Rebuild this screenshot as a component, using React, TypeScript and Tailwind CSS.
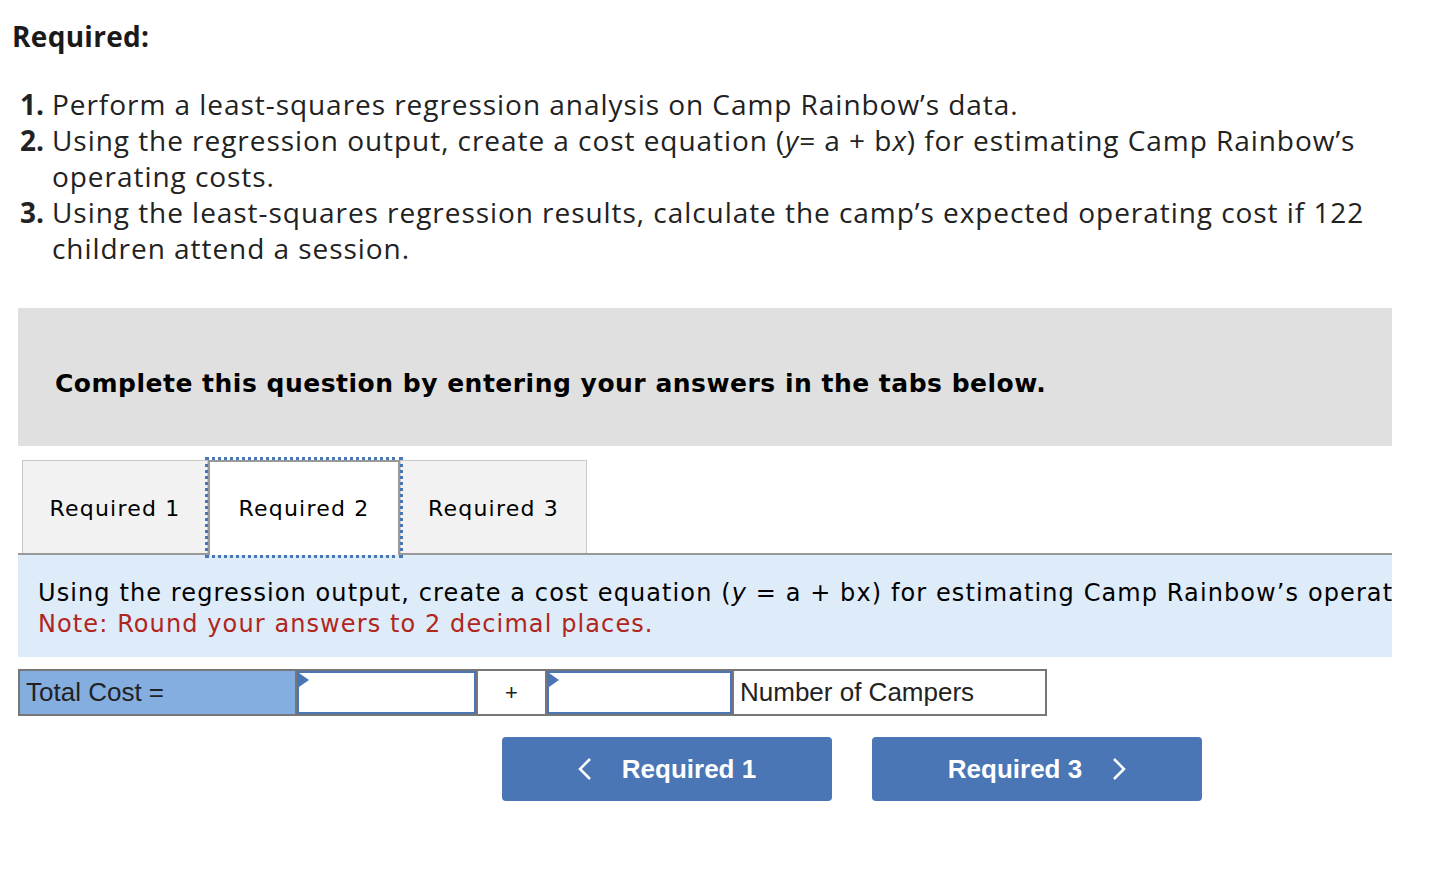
import React from "react";

const Tri = () => (
  <svg className="absolute left-0 top-0" width="10" height="14" viewBox="0 0 10 14">
    <polygon points="0,0 10,7 0,14" fill="#4a76b5" />
  </svg>
);

export default function App() {
  return (
    <div className="w-[1434px] h-[872px] bg-white text-[#222]">
      <div className="pl-[12px] pt-[18px]" style={{ fontFamily: "'Open Sans', Lato, sans-serif" }}>
        <div className="text-[28px] tracking-[0.3px] font-bold leading-[36px] text-[#1a1a1a]">Required:</div>
        <ol className="mt-[32px] text-[28px] leading-[36px] text-[#222] tracking-[0.95px]">
          <li className="flex">
            <span className="w-[40px] shrink-0 text-right pr-[8px] font-bold tracking-normal">1.</span>
            <span>Perform a least-squares regression analysis on Camp Rainbow’s data.</span>
          </li>
          <li className="flex">
            <span className="w-[40px] shrink-0 text-right pr-[8px] font-bold tracking-normal">2.</span>
            <span className="w-[1330px]">
              Using the regression output, create a cost equation (<i>y</i>= a + b<i>x</i>) for estimating Camp Rainbow’s operating costs.
            </span>
          </li>
          <li className="flex">
            <span className="w-[40px] shrink-0 text-right pr-[8px] font-bold tracking-normal">3.</span>
            <span className="w-[1330px]">
              Using the least-squares regression results, calculate the camp’s expected operating cost if 122 children attend a session.
            </span>
          </li>
        </ol>
      </div>

      <div className="ml-[18px] w-[1374px] mt-[42px]">
        <div
          className="h-[138px] bg-[#e0e0e0] flex items-center pl-[37px] pt-[14px] text-[25px] tracking-[0.5px] font-bold text-black"
          style={{ fontFamily: "'DejaVu Sans', Verdana, sans-serif" }}
        >
          Complete this question by entering your answers in the tabs below.
        </div>

        <div
          className="mt-[14px] flex items-end border-b-2 border-[#999] pl-[4px] h-[95px]"
          style={{ fontFamily: "'DejaVu Sans', Verdana, sans-serif" }}
        >
          <div className="w-[186px] h-[93px] pt-[3px] bg-[#f2f2f2] border border-b-0 border-[#c8c8c8] flex items-center justify-center text-[22px] tracking-[1.2px] text-black">
            Required 1
          </div>
          <div className="relative w-[192px] h-[95px] -mb-[2px] bg-white border-2 border-b-0 border-[#999] outline-3 outline-dotted outline-[#4a76b5] flex items-center justify-center text-[22px] tracking-[1.2px] text-black">
            Required 2
          </div>
          <div className="w-[187px] h-[93px] pt-[3px] bg-[#f2f2f2] border border-b-0 border-[#c8c8c8] flex items-center justify-center text-[22px] tracking-[1.2px] text-black">
            Required 3
          </div>
        </div>

        <div
          className="h-[102px] bg-[#deebf8] overflow-hidden pl-[20px] pt-[23px] text-[24px] tracking-[1.1px] leading-[31px] whitespace-nowrap"
          style={{ fontFamily: "'DejaVu Sans', Verdana, sans-serif" }}
        >
          <div className="text-black">
            Using the regression output, create a cost equation (<i>y</i> = a + bx) for estimating Camp Rainbow’s operating costs.
          </div>
          <div className="text-[#b0251d]">Note: Round your answers to 2 decimal places.</div>
        </div>

        <div
          className="mt-[12px] flex h-[47px] w-[1029px] border-2 border-[#777] text-[26px] text-[#222]"
          style={{ fontFamily: "'Liberation Sans', Arial, sans-serif" }}
        >
          <div className="w-[277px] bg-[#84aee0] border-r-2 border-[#777] flex items-center pl-[6px]">Total Cost =</div>
          <div className="relative w-[179px] border-2 border-[#4a76b5] bg-white">
            <Tri />
          </div>
          <div className="w-[71px] border-x-2 border-[#777] flex items-center justify-center text-[22px]">+</div>
          <div className="relative w-[185px] border-2 border-[#4a76b5] bg-white">
            <Tri />
          </div>
          <div className="flex-1 border-l-2 border-[#777] flex items-center pl-[6px]">Number of Campers</div>
        </div>

        <div
          className="mt-[21px] flex gap-[40px] pl-[484px]"
          style={{ fontFamily: "'Liberation Sans', Arial, sans-serif" }}
        >
          <button className="w-[330px] h-[64px] rounded-[4px] bg-[#4a76b5] text-white text-[26px] font-bold flex items-center justify-center gap-[30px]">
            <svg width="14" height="24" viewBox="0 0 14 24">
              <polyline points="12,2 2,12 12,22" fill="none" stroke="white" strokeWidth="2.5" />
            </svg>
            <span>Required 1</span>
          </button>
          <button className="w-[330px] h-[64px] rounded-[4px] bg-[#4a76b5] text-white text-[26px] font-bold flex items-center justify-center gap-[30px]">
            <span>Required 3</span>
            <svg width="14" height="24" viewBox="0 0 14 24">
              <polyline points="2,2 12,12 2,22" fill="none" stroke="white" strokeWidth="2.5" />
            </svg>
          </button>
        </div>
      </div>
    </div>
  );
}
